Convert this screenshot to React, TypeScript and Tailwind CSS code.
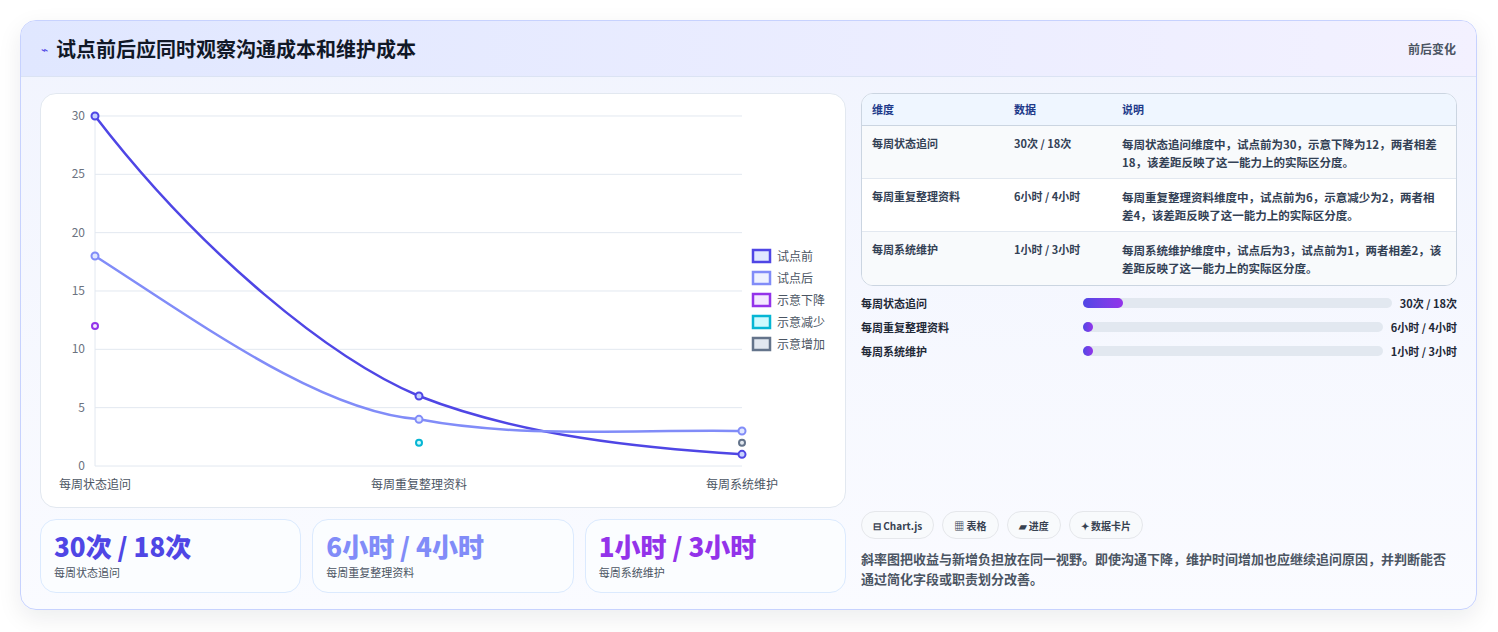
import React from 'react';

const font = { fontFamily: '"Noto Sans CJK SC", "Noto Sans", sans-serif' };

const rows = [
  { dim: '每周状态追问', data: '30次 / 18次', note: '每周状态追问维度中，试点前为30，示意下降为12，两者相差18，该差距反映了这一能力上的实际区分度。', pct: 13 },
  { dim: '每周重复整理资料', data: '6小时 / 4小时', note: '每周重复整理资料维度中，试点前为6，示意减少为2，两者相差4，该差距反映了这一能力上的实际区分度。', pct: 2 },
  { dim: '每周系统维护', data: '1小时 / 3小时', note: '每周系统维护维度中，试点后为3，试点前为1，两者相差2，该差距反映了这一能力上的实际区分度。', pct: 2 },
];

const legend = [
  { label: '试点前', stroke: '#4f46e5', fill: '#e0e7ff' },
  { label: '试点后', stroke: '#818cf8', fill: '#eef2ff' },
  { label: '示意下降', stroke: '#9333ea', fill: '#f3e8ff' },
  { label: '示意减少', stroke: '#06b6d4', fill: '#cffafe' },
  { label: '示意增加', stroke: '#64748b', fill: '#e2e8f0' },
];

const Chart = () => {
  const ys = [0, 5, 10, 15, 20, 25, 30];
  const y = (v: number) => 372 - v * 11.667;
  return (
    <svg width="806" height="415" viewBox="0 0 806 415" className="block">
      {ys.map((v) => (
        <g key={v}>
          <line x1="54" x2="701" y1={y(v)} y2={y(v)} stroke="#e2e8f0" />
          <text x="44" y={y(v) + 4} textAnchor="end" fontSize="12" fill="#6b7280">{v}</text>
        </g>
      ))}
      <line x1="54" x2="54" y1={y(30)} y2={y(0)} stroke="#e2e8f0" />
      {[['每周状态追问', 54], ['每周重复整理资料', 378], ['每周系统维护', 701]].map(([t, x]) => (
        <text key={t as string} x={x as number} y="395" textAnchor="middle" fontSize="12" fill="#4b5563">{t}</text>
      ))}
      <path d={`M54 ${y(30)} C 160 160, 290 265, 378 ${y(6)} C 480 342, 600 354, 701 ${y(1)}`} fill="none" stroke="#4f46e5" strokeWidth="2.5" />
      <path d={`M54 ${y(18)} C 160 230, 280 318, 378 ${y(4)} C 480 345, 600 335, 701 ${y(3)}`} fill="none" stroke="#818cf8" strokeWidth="2.5" />
      {[[54, 30], [378, 6], [701, 1]].map(([x, v]) => (
        <circle key={x} cx={x} cy={y(v)} r="3.5" fill="#c7d2fe" stroke="#4f46e5" strokeWidth="2" />
      ))}
      {[[54, 18], [378, 4], [701, 3]].map(([x, v]) => (
        <circle key={x} cx={x} cy={y(v)} r="3.5" fill="#e0e7ff" stroke="#818cf8" strokeWidth="2" />
      ))}
      <circle cx="54" cy={y(12)} r="3" fill="#f3e8ff" stroke="#9333ea" strokeWidth="2" />
      <circle cx="378" cy={y(2)} r="3" fill="#cffafe" stroke="#06b6d4" strokeWidth="2" />
      <circle cx="701" cy={y(2)} r="3" fill="#e2e8f0" stroke="#64748b" strokeWidth="2" />
      {legend.map((l, i) => (
        <g key={l.label} transform={`translate(712 ${156 + i * 22})`}>
          <rect x="0" y="0" width="17" height="12" fill={l.fill} stroke={l.stroke} strokeWidth="2.5" />
          <text x="24" y="11" fontSize="12" fill="#4b5563">{l.label}</text>
        </g>
      ))}
    </svg>
  );
};

export default function App() {
  return (
    <div className="min-h-screen bg-white pt-5 px-5" style={font}>
      <div className="w-[1457px] h-[590px] rounded-2xl border border-[#c7d2fe] bg-gradient-to-b from-[#f1f4fe] to-[#fafbff] shadow-[0_8px_24px_rgba(15,23,42,0.08)] overflow-hidden">
        <div className="h-[56px] flex items-center justify-between px-5 bg-gradient-to-r from-[#e0e7ff] to-[#f3f1ff] border-b border-[#dbe3f3]">
          <div className="flex items-center gap-2">
            <span className="text-[#4f46e5] text-xs">⌁</span>
            <h1 className="text-[20px] font-bold text-[#111827]">试点前后应同时观察沟通成本和维护成本</h1>
          </div>
          <span className="text-xs font-semibold text-[#4b5563]">前后变化</span>
        </div>
        <div className="flex gap-[15px] px-[19px] pt-4">
          <div className="w-[806px] flex flex-col gap-[11px]">
            <div className="h-[415px] rounded-2xl border border-[#e2e8f0] bg-white overflow-hidden">
              <Chart />
            </div>
            <div className="grid grid-cols-3 gap-[11px]">
              {[['30次 / 18次', 'text-[#4f46e5]', '每周状态追问'], ['6小时 / 4小时', 'text-[#818cf8]', '每周重复整理资料'], ['1小时 / 3小时', 'text-[#9333ea]', '每周系统维护']].map(([v, c, l]) => (
                <div key={l} className="h-[74px] rounded-2xl border border-[#dbeafe] bg-[#fbfdff] px-[13px] pt-[10px]">
                  <div className={`text-[26px] leading-8 font-extrabold ${c}`}>{v}</div>
                  <div className="text-[11px] text-[#4b5563] mt-0.5">{l}</div>
                </div>
              ))}
            </div>
          </div>
          <div className="w-[598px] flex flex-col">
            <div className="rounded-xl border border-[#cbd5e1] bg-white overflow-hidden text-[11px]">
              <div className="flex h-[32px] items-center bg-[#eff6ff] border-b border-[#cbd5e1] font-semibold text-[#1e3a8a]">
                <div className="w-[152px] pl-[10px]">维度</div>
                <div className="w-[108px]">数据</div>
                <div className="flex-1">说明</div>
              </div>
              {rows.map((r, i) => (
                <div key={r.dim} className={`flex h-[53px] pt-[9px] font-semibold text-[#334155] ${i < 2 ? 'border-b border-[#e2e8f0]' : ''} ${i === 1 ? 'bg-white' : 'bg-[#f8fafc]'}`}>
                  <div className="w-[152px] pl-[10px]">{r.dim}</div>
                  <div className="w-[108px]">{r.data}</div>
                  <div className="flex-1 pr-[14px] text-[11.5px] leading-[18px]">{r.note}</div>
                </div>
              ))}
            </div>
            <div className="flex flex-col gap-[8px] mt-[9px]">
              {rows.map((r) => (
                <div key={r.dim} className="flex items-center h-[16px] text-[11px] font-semibold text-[#1f2937]">
                  <div className="w-[222px]">{r.dim}</div>
                  <div className="flex-1 h-[10px] rounded-full bg-[#e2e8f0] mr-[8px]">
                    <div className="h-full rounded-full bg-gradient-to-r from-[#4f46e5] to-[#9333ea]" style={{ width: `${r.pct}%`, minWidth: 10 }} />
                  </div>
                  <div>{r.data}</div>
                </div>
              ))}
            </div>
            <div className="mt-auto mb-[4px]">
              <div className="flex gap-2 mb-[10px]">
                {['⊟ Chart.js', '▦ 表格', '▰ 进度', '✦ 数据卡片'].map((t) => (
                  <span key={t} className="h-[28px] flex items-center px-[11px] rounded-full border border-[#e5e7eb] bg-[#f8fafc] text-[10px] font-semibold text-[#374151]">{t}</span>
                ))}
              </div>
              <p className="text-[13px] leading-5 font-semibold text-[#4b5563] pr-2">斜率图把收益与新增负担放在同一视野。即使沟通下降，维护时间增加也应继续追问原因，并判断能否通过简化字段或职责划分改善。</p>
            </div>
          </div>
        </div>
      </div>
    </div>
  );
}
